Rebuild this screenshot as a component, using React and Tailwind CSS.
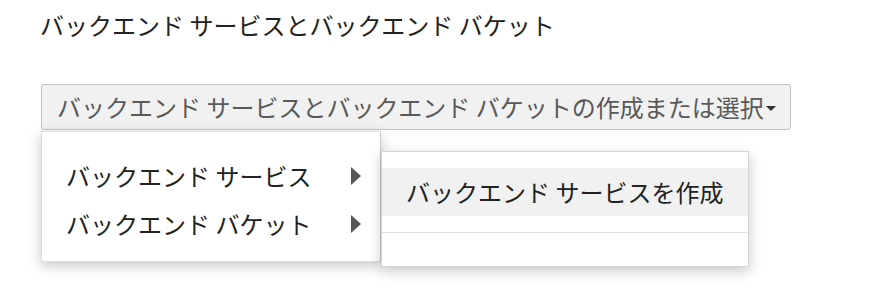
import React from 'react'

const font = { fontFamily: '"Noto Sans CJK JP", "Liberation Sans", sans-serif' }

function Arrow() {
  return (
    <svg width="10" height="18" viewBox="0 0 10 18" className="shrink-0">
      <polygon points="0,0 10,9 0,18" fill="#555" />
    </svg>
  )
}

function MenuItem({ label }) {
  return (
    <div className="h-[48px] flex items-center justify-between pl-[24px] pr-[19px]">
      <span>{label}</span>
      <Arrow />
    </div>
  )
}

export default function App() {
  return (
    <div className="w-[884px] h-[304px] bg-white text-[24px] text-[#222] pl-[40px] pt-[9px]" style={font}>
      <div className="leading-[32px]">バックエンド サービスとバックエンド バケット</div>

      <div className="relative mt-[43px] ml-[1px] w-[750px]">
        <button
          type="button"
          className="w-full h-[46px] flex items-center pl-[15px] border border-[#c3c3c3] rounded-[3px] bg-[#f1f1f1] text-[#595959] leading-none"
        >
          <span>バックエンド サービスとバックエンド バケットの作成または選択</span>
          <span className="ml-[2px] mt-[3px] w-0 h-0 border-l-[5px] border-r-[5px] border-t-[5px] border-l-transparent border-r-transparent border-t-[#333]" />
        </button>

        <div className="absolute left-0 top-[47px] w-[340px] bg-white border border-[#dcdcdc] border-r-[#c8c8c8] shadow-[0_4px_12px_rgba(0,0,0,0.22)] pt-[20px] pb-[13px]">
          <MenuItem label="バックエンド サービス" />
          <MenuItem label="バックエンド バケット" />

          <div className="absolute left-[339px] top-[19px] w-[368px] bg-white border border-[#d4d4d4] shadow-[0_4px_12px_rgba(0,0,0,0.22)] pt-[16px]">
            <div className="h-[48px] flex items-center bg-[#f1f1f1] pl-[24px]">
              バックエンド サービスを作成
            </div>
            <div className="mt-[16px] border-t border-[#dedede] h-[34px]" />
          </div>
        </div>
      </div>
    </div>
  )
}
